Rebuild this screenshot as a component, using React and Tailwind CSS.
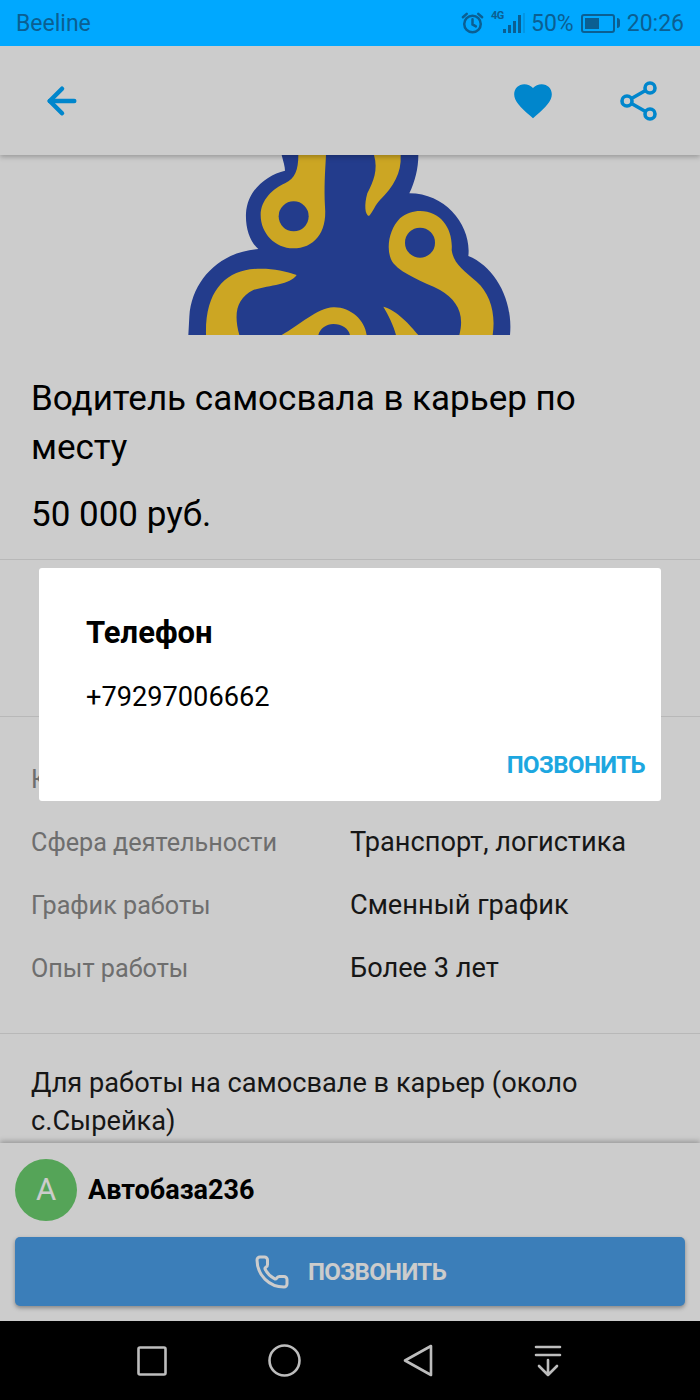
import { ArrowLeft, Phone } from 'lucide-react'

// status bar glyphs, drawn to match the reference
function StatusIcons() {
  return (
    <div className="flex items-center text-[#0b5f92]">
      <svg width="25" height="24" viewBox="0 0 26 24" fill="none" stroke="currentColor" strokeWidth="2.6" strokeLinecap="round">
        <circle cx="13" cy="13" r="8.6" />
        <path d="M13 8v5.5l3.5 2M3 6l4-3.5M23 6l-4-3.5" />
      </svg>
      <div className="relative ml-[6px] w-[34px] h-[24px]">
        <span className="absolute left-0 top-[-1px] text-[11px] font-bold leading-[12px] tracking-[-0.5px]">4G</span>
        <svg className="absolute left-0 top-0" width="34" height="24" viewBox="0 0 34 24" fill="currentColor">
          <rect x="12" y="18" width="3" height="4" />
          <rect x="17" y="14" width="3" height="8" />
          <rect x="22" y="10" width="3" height="12" />
          <rect x="27" y="4" width="3" height="18" />
          <rect x="32" y="2" width="2" height="20" opacity="0.25" />
        </svg>
      </div>
      <span className="ml-[6px] text-[23px] leading-none">50%</span>
      <div className="ml-[7px] flex items-center">
        <div className="w-[34px] h-[19px] border-2 border-current rounded-[3px] p-[2px]">
          <div className="w-[14px] h-full bg-current" />
        </div>
        <div className="ml-[2px] w-[3px] h-[10px] bg-current rounded-r-sm" />
      </div>
      <span className="ml-[7px] text-[23px] leading-none">20:26</span>
    </div>
  )
}

function Logo() {
  return (
    <svg width="360" height="180" viewBox="0 15 1080 540">
      <path
        fill="#2c4baf"
        d="M335 15 C340 35 345 50 345 62 C290 75 232 120 228 190 C226 235 240 275 265 297 C150 305 65 390 58 500 L55 555 L1020 555 C1030 450 975 350 895 318 C905 230 830 130 718 130 C735 95 745 55 745 15 Z"
      />
      <g fill="#ffd02c">
        <path d="M385 15 L468 15 C465 70 462 110 465 170 C472 250 430 295 370 295 C315 295 272 250 272 195 C272 150 310 115 345 100 C375 85 385 60 385 15 Z" />
        <path d="M612 15 L692 15 C695 70 670 110 630 150 C615 165 610 185 597 198 C585 195 582 165 592 130 C610 95 625 60 612 15 Z" />
        <path d="M750 183 C815 183 850 240 845 300 C850 340 880 360 920 395 C960 430 978 490 968 555 L868 555 C885 490 860 450 810 420 C760 395 700 375 670 340 C645 305 655 240 690 205 C708 190 730 183 750 183 Z" />
        <path d="M380 375 C340 360 290 352 240 358 C160 370 105 430 108 555 L208 555 C190 490 200 445 250 420 C300 405 360 405 380 375 Z" />
        <path d="M335 555 C390 525 440 475 490 472 C540 470 585 510 590 555 Z" />
        <path d="M640 470 C680 480 720 525 745 555 L678 555 C670 525 655 495 640 470 Z" />
      </g>
      <g fill="#2c4baf">
        <circle cx="371" cy="199" r="45" />
        <circle cx="750" cy="278" r="45" />
        <path d="M445 555 C450 535 470 522 490 522 C515 522 535 535 540 555 Z" />
      </g>
    </svg>
  )
}

function InfoRow({ label, value }) {
  return (
    <div className="flex items-center h-[63px]">
      <span className="w-[319px] text-[25.2px] text-[#8a8a8a]">{label}</span>
      <span className="text-[27.2px] text-[#1c1c1c]">{value}</span>
    </div>
  )
}

function NavBar() {
  return (
    <div className="h-[79px] bg-black flex items-center pl-[85px] shrink-0">
      <div className="w-[133px] flex justify-center">
        <svg width="30" height="30" viewBox="0 0 30 30" fill="none" stroke="#bdbdbd" strokeWidth="2.6" strokeLinejoin="round">
          <rect x="1.5" y="1.5" width="27" height="27" rx="1.5" />
        </svg>
      </div>
      <div className="w-[133px] flex justify-center">
        <svg width="33" height="33" viewBox="0 0 33 33" fill="none" stroke="#bdbdbd" strokeWidth="2.6">
          <circle cx="16.5" cy="16.5" r="15" />
        </svg>
      </div>
      <div className="w-[133px] flex justify-center">
        <svg width="30" height="33" viewBox="0 0 30 33" fill="none" stroke="#bdbdbd" strokeWidth="2.6" strokeLinejoin="round">
          <path d="M28 2 L2 16.5 L28 31 Z" />
        </svg>
      </div>
      <div className="w-[127px] flex justify-center">
        <svg width="28" height="32" viewBox="0 0 28 32" fill="none" stroke="#bdbdbd" strokeWidth="2.6" strokeLinecap="round" strokeLinejoin="round">
          <path d="M2 2h24M2 10h24M14 15v15M5 21l9 9 9-9" />
        </svg>
      </div>
    </div>
  )
}

export default function App() {
  return (
    <div className="h-[1400px] flex flex-col overflow-hidden bg-black font-['Roboto',sans-serif]">
      {/* Status bar */}
      <div className="h-[46px] bg-[#00a8ff] flex items-center justify-between pl-[16px] pr-[16px] shrink-0">
        <span className="text-[#0b5f92] text-[23px] leading-none">Beeline</span>
        <StatusIcons />
      </div>

      <div className="relative flex-1 flex flex-col overflow-hidden bg-white">
        {/* Toolbar */}
        <div className="h-[109px] shrink-0 flex items-center justify-between pl-[41px] pr-[42px] shadow-[0_2px_5px_rgba(0,0,0,0.25)] relative z-10 bg-white">
          <ArrowLeft size={42} color="#00a8ff" strokeWidth={2.6} />
          <div className="flex items-center gap-[67px]">
            <svg width="40" height="36" viewBox="0 0 24 22" fill="#00a8ff">
              <path d="M12 21.5 L10.3 20 C4.2 14.5 0.5 11.1 0.5 6.8 C0.5 3.3 3.2 0.7 6.7 0.7 C8.7 0.7 10.7 1.6 12 3.1 C13.3 1.6 15.3 0.7 17.3 0.7 C20.8 0.7 23.5 3.3 23.5 6.8 C23.5 11.1 19.8 14.5 13.7 20 Z" />
            </svg>
            <svg width="38" height="40" viewBox="0 0 38 40" fill="none" stroke="#00a8ff" strokeWidth="3.6">
              <circle cx="30" cy="7" r="5" />
              <circle cx="7" cy="20" r="5" />
              <circle cx="30" cy="33" r="5" />
              <path d="M11.5 17.5 L25.5 9.5 M11.5 22.5 L25.5 30.5" />
            </svg>
          </div>
        </div>

        {/* Logo */}
        <div className="h-[180px] shrink-0 flex justify-center bg-white">
          <Logo />
        </div>

        {/* Title */}
        <div className="h-[225px] shrink-0 border-b border-[#e6e6e6] pl-[32px] pr-[32px] pt-[39px] text-black">
          <h1 className="text-[35px] leading-[49px] font-normal -ml-[1px]">Водитель самосвала в карьер по месту</h1>
          <p className="text-[35px] leading-[49px] mt-[18px] -ml-[1px]">50 000 руб.</p>
        </div>

        <div className="h-[157px] shrink-0 border-b border-[#e6e6e6]" />

        {/* Details */}
        <div className="h-[317px] shrink-0 border-b border-[#e6e6e6] pl-[31px] pt-[31px]">
          <InfoRow label="Компания" value="" />
          <InfoRow label="Сфера деятельности" value="Транспорт, логистика" />
          <InfoRow label="График работы" value="Сменный график" />
          <InfoRow label="Опыт работы" value="Более 3 лет" />
        </div>

        {/* Description */}
        <div className="flex-1 pl-[31px] pr-[32px] pt-[30px] text-[27.2px] leading-[38px] text-[#1c1c1c]">
          Для работы на самосвале в карьер (около с.Сырейка)
        </div>

        {/* Employer and call button */}
        <div className="absolute left-0 right-0 bottom-0 h-[178px] bg-white shadow-[0_-2px_5px_rgba(0,0,0,0.25)] pl-[15px] pr-[15px] pt-[16px]">
          <div className="flex items-center">
            <div className="w-[62px] h-[62px] rounded-full bg-[#6bce6e] flex items-center justify-center text-white text-[31px]">A</div>
            <span className="ml-[11px] text-[27px] font-bold text-black">Автобаза236</span>
          </div>
          <button className="mt-[16px] w-full h-[69px] rounded-[5px] bg-[#4a9ee8] shadow-[0_2px_4px_rgba(0,0,0,0.35)] flex items-center justify-center text-white text-[24px] font-bold tracking-[-0.6px]">
            <Phone size={36} strokeWidth={2} className="mr-[18px]" />
            ПОЗВОНИТЬ
          </button>
        </div>

        {/* Dim layer */}
        <div className="absolute inset-0 z-20 bg-black/20" />

        {/* Dialog */}
        <div className="absolute z-30 left-[39px] top-[522px] w-[622px] h-[233px] bg-white rounded-[3px] pl-[47px] pr-[16px] pt-[47px]">
          <h2 className="text-[31px] leading-[36px] font-bold text-black">Телефон</h2>
          <p className="mt-[28px] text-[27.2px] leading-[36px] text-black">+79297006662</p>
          <div className="mt-[33px] text-right text-[24px] leading-[34px] font-bold tracking-[-0.6px] text-[#1da7e0]">ПОЗВОНИТЬ</div>
        </div>
      </div>

      <NavBar />
    </div>
  )
}
